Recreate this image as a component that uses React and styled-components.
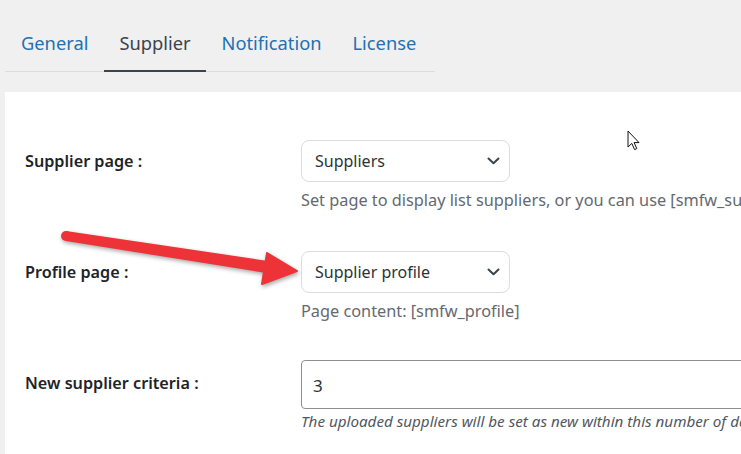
import React from "react";
import styled, { createGlobalStyle } from "styled-components";

const tabs = [
	{ title: "General", active: false },
	{ title: "Supplier", active: true },
	{ title: "Notification", active: false },
	{ title: "License", active: false },
];

function Chevron() {
	return (
		<svg width="13" height="8" viewBox="0 0 13 8">
			<path d="M1.5 1.5 L6.5 6.3 L11.5 1.5" fill="none" stroke="#3c434a" strokeWidth="2" strokeLinecap="round" strokeLinejoin="round" />
		</svg>
	);
}

function App() {
	return (
		<>
			<GlobalStyle />
			<Page>
				<Header>
					<Tabs>
						{tabs.map((tab, index) => (
							<Tab key={index + 1} active={tab.active}>
								{tab.title}
							</Tab>
						))}
					</Tabs>
				</Header>
				<Panel>
					<Row gap={41}>
						<Label>Supplier page :</Label>
						<Field>
							<Select>
								<span>Suppliers</span>
								<Chevron />
							</Select>
							<Desc>Set page to display list suppliers, or you can use [smfw_suppliers]</Desc>
						</Field>
					</Row>
					<Row gap={39}>
						<Label>Profile page :</Label>
						<Field>
							<Select>
								<span>Supplier profile</span>
								<Chevron />
							</Select>
							<Desc>Page content: [smfw_profile]</Desc>
						</Field>
					</Row>
					<Row gap={0}>
						<Label tall>New supplier criteria :</Label>
						<Field>
							<Input>3</Input>
							<Note>The uploaded suppliers will be set as new within this number of days</Note>
						</Field>
					</Row>
				</Panel>
				<Arrow viewBox="0 0 741 454" width="741" height="454">
					<polygon points="66,231 268,261 266,273 66,241" fill="#ee3338" />
					<circle cx="66" cy="236" r="5" fill="#ee3338" />
					<polygon points="267,253 297,271 262,284" fill="#ee3338" strokeLinejoin="round" stroke="#ee3338" strokeWidth="2" />
				</Arrow>
				<Cursor width="14" height="22" viewBox="0 0 14 22">
					<path d="M1 1 L1 17 L4.8 13.4 L7.6 19.6 L9.8 18.6 L7.1 12.6 L12 12.6 Z" fill="#fff" stroke="#111" strokeWidth="1" strokeLinejoin="round" />
				</Cursor>
			</Page>
		</>
	);
}

export default App;

const GlobalStyle = createGlobalStyle`
	html, body {
		margin: 0;
		padding: 0;
		overflow: hidden;
		background: #f0f0f1;
	}
	body {
		font-family: "Noto Sans", "Open Sans", sans-serif;
		color: #1d2327;
	}
`;

const Page = styled.div`
	position: relative;
	width: 741px;
	height: 454px;
	padding-left: 5px;
	box-sizing: border-box;
	background: #f0f0f1;
	overflow: hidden;
`;

const Header = styled.div`
	height: 92px;
	padding-top: 24px;
	box-sizing: border-box;
`;

const Tabs = styled.nav`
	display: flex;
	width: 430px;
	height: 48px;
	border-bottom: 1px solid #dcdcde;
	box-sizing: border-box;
	padding-left: 0.5px;
`;

const Tab = styled.div`
	padding: 0 15.5px;
	height: 48px;
	margin-bottom: -1px;
	box-sizing: border-box;
	font-size: 18.3px;
	line-height: 38px;
	color: ${(p) => (p.active ? "#3c434a" : "#2271b1")};
	border-bottom: 2px solid ${(p) => (p.active ? "#3c434a" : "transparent")};
`;

const Panel = styled.div`
	background: #fff;
	height: 362px;
	padding-top: 48px;
	box-sizing: border-box;
`;

const Row = styled.div`
	display: grid;
	grid-template-columns: 296px 1fr;
	margin-bottom: ${(p) => p.gap}px;
`;

const Label = styled.div`
	padding-left: 20px;
	font-size: 16.2px;
	font-weight: 600;
	line-height: ${(p) => (p.tall ? "46px" : "42px")};
	color: #1d2327;
	white-space: nowrap;
`;

const Field = styled.div`
	display: flex;
	flex-direction: column;
	align-items: flex-start;
	min-width: 0;
`;

const Select = styled.div`
	display: flex;
	align-items: center;
	justify-content: space-between;
	width: 209px;
	height: 42px;
	padding: 0 9px 0 13px;
	box-sizing: border-box;
	border: 1px solid #dcdcde;
	border-radius: 8px;
	background: #fff;
	font-size: 16px;
	color: #2c3338;
`;

const Desc = styled.p`
	margin: 8px 0 0;
	font-size: 16.3px;
	line-height: 20px;
	color: #646970;
	white-space: nowrap;
`;

const Input = styled.div`
	width: 520px;
	height: 49px;
	padding-left: 11px;
	box-sizing: border-box;
	border: 1px solid #8c8f94;
	border-radius: 4px;
	font-size: 17px;
	line-height: 49px;
	color: #2c3338;
`;

const Note = styled.p`
	margin: 2px 0 0;
	font-size: 15.2px;
	font-style: italic;
	line-height: 20px;
	color: #50575e;
	white-space: nowrap;
`;

const Arrow = styled.svg`
	position: absolute;
	left: 0;
	top: 0;
	pointer-events: none;
	filter: drop-shadow(1px 2px 2px rgba(0, 0, 0, 0.35));
`;

const Cursor = styled.svg`
	position: absolute;
	left: 627px;
	top: 130px;
`;
